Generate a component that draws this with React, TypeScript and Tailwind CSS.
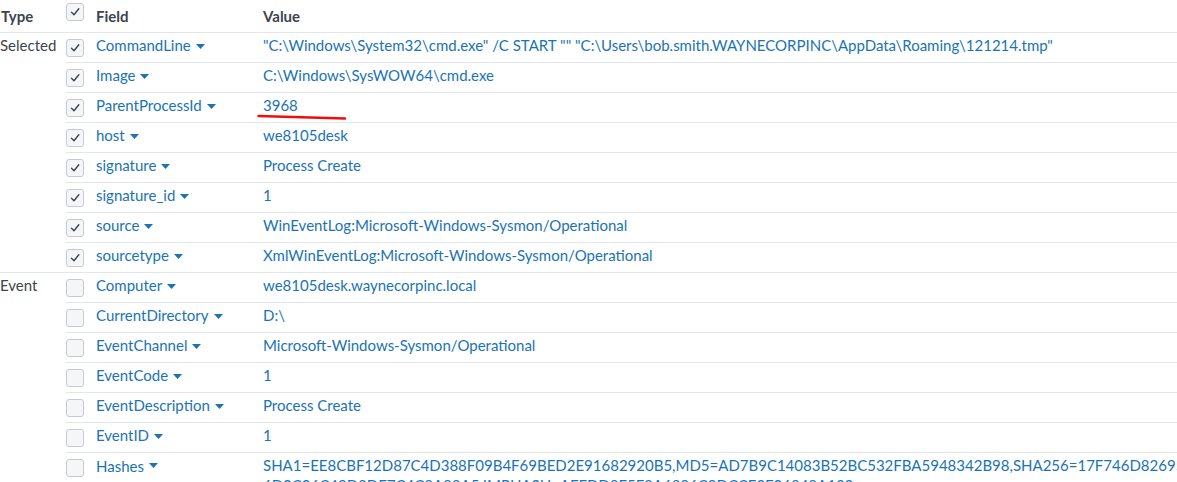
import React from 'react';

type Row = { field: string; value: string; checked: boolean };

const selectedRows: Row[] = [
  { field: 'CommandLine', value: '"C:\\Windows\\System32\\cmd.exe" /C START "" "C:\\Users\\bob.smith.WAYNECORPINC\\AppData\\Roaming\\121214.tmp"', checked: true },
  { field: 'Image', value: 'C:\\Windows\\SysWOW64\\cmd.exe', checked: true },
  { field: 'ParentProcessId', value: '3968', checked: true },
  { field: 'host', value: 'we8105desk', checked: true },
  { field: 'signature', value: 'Process Create', checked: true },
  { field: 'signature_id', value: '1', checked: true },
  { field: 'source', value: 'WinEventLog:Microsoft-Windows-Sysmon/Operational', checked: true },
  { field: 'sourcetype', value: 'XmlWinEventLog:Microsoft-Windows-Sysmon/Operational', checked: true },
];

const eventRows: Row[] = [
  { field: 'Computer', value: 'we8105desk.waynecorpinc.local', checked: false },
  { field: 'CurrentDirectory', value: 'D:\\', checked: false },
  { field: 'EventChannel', value: 'Microsoft-Windows-Sysmon/Operational', checked: false },
  { field: 'EventCode', value: '1', checked: false },
  { field: 'EventDescription', value: 'Process Create', checked: false },
  { field: 'EventID', value: '1', checked: false },
];

function Checkbox({ checked }: { checked: boolean }) {
  return (
    <div className="w-[18px] h-[18px] shrink-0 rounded-[3px] border border-[#c3cbd4] bg-[#f5f6f8] flex items-center justify-center">
      {checked && (
        <svg width="12" height="12" viewBox="0 0 12 12" fill="none">
          <path d="M2.5 6.2 L5 8.7 L9.8 2.8" stroke="#3c444d" strokeWidth="1.4" strokeLinecap="round" strokeLinejoin="round" />
        </svg>
      )}
    </div>
  );
}

function Caret() {
  return (
    <svg width="9" height="5" viewBox="0 0 9 5" className="ml-[5px] mt-[1px] shrink-0">
      <path d="M0 0 H9 L4.5 5 Z" fill="#1a73b5" />
    </svg>
  );
}

function FieldRow({ row, children }: { row: Row; children?: React.ReactNode }) {
  return (
    <div className="flex h-[30px] items-center pb-[4px] border-t border-[#e1e6eb]">
      <div className="w-[30px] shrink-0 flex items-center pt-[4px]">
        <Checkbox checked={row.checked} />
      </div>
      <div className="w-[167px] shrink-0 flex items-center text-[#1a73b5]">
        <span>{row.field}</span>
        <Caret />
      </div>
      <div className="relative whitespace-nowrap text-[#1a73b5]">
        {row.value}
        {children}
      </div>
    </div>
  );
}

function Section({ label, rows, extra }: { label: string; rows: Row[]; extra?: React.ReactNode }) {
  return (
    <div className="flex border-t border-[#e1e6eb]">
      <div className="w-[66px] shrink-0 pt-[1px] text-[#3c444d]">{label}</div>
      <div className="flex-1 -mt-px">
        {rows.map((row) => (
          <FieldRow key={row.field} row={row}>
            {row.field === 'ParentProcessId' && (
              <svg className="absolute left-[-6px] top-[19px]" width="92" height="8" viewBox="0 0 92 8">
                <path d="M1.5 3 L88 5.5" stroke="#f20d0d" strokeWidth="2.4" fill="none" strokeLinecap="round" />
              </svg>
            )}
          </FieldRow>
        ))}
        {extra}
      </div>
    </div>
  );
}

export default function App() {
  return (
    <div className="w-[1177px] h-[482px] overflow-hidden bg-white text-[15px] font-['Lato','Liberation_Sans',sans-serif]">
      {/* Header */}
      <div className="flex h-[32px] items-center font-bold text-[#3c444d]">
        <div className="w-[66px] shrink-0 pl-px">Type</div>
        <div className="w-[30px] shrink-0 -mt-[8px]">
          <Checkbox checked />
        </div>
        <div className="w-[167px] shrink-0">Field</div>
        <div>Value</div>
      </div>

      <Section label="Selected" rows={selectedRows} />
      <Section
        label="Event"
        rows={eventRows}
        extra={
          <div className="flex border-t border-[#e1e6eb] pt-[2px]">
            <div className="w-[30px] shrink-0 flex pt-[4px]">
              <Checkbox checked={false} />
            </div>
            <div className="w-[167px] shrink-0 flex items-start text-[#1a73b5]">
              <span>Hashes</span>
              <span className="mt-[7px]">
                <Caret />
              </span>
            </div>
            <div className="text-[#1a73b5] whitespace-nowrap leading-[20px]">
              <div>SHA1=EE8CBF12D87C4D388F09B4F69BED2E91682920B5,MD5=AD7B9C14083B52BC532FBA5948342B98,SHA256=17F746D82695FA9B35493B41859D39D786D32B23A9D2E00F4011DEC7A02402AE</div>
              <div>6D0C06C49D8DE7C4C8A88A5,IMPHASH=AFFDD8F5F8A6836C9DCCE3F06848A122</div>
            </div>
          </div>
        }
      />
    </div>
  );
}
